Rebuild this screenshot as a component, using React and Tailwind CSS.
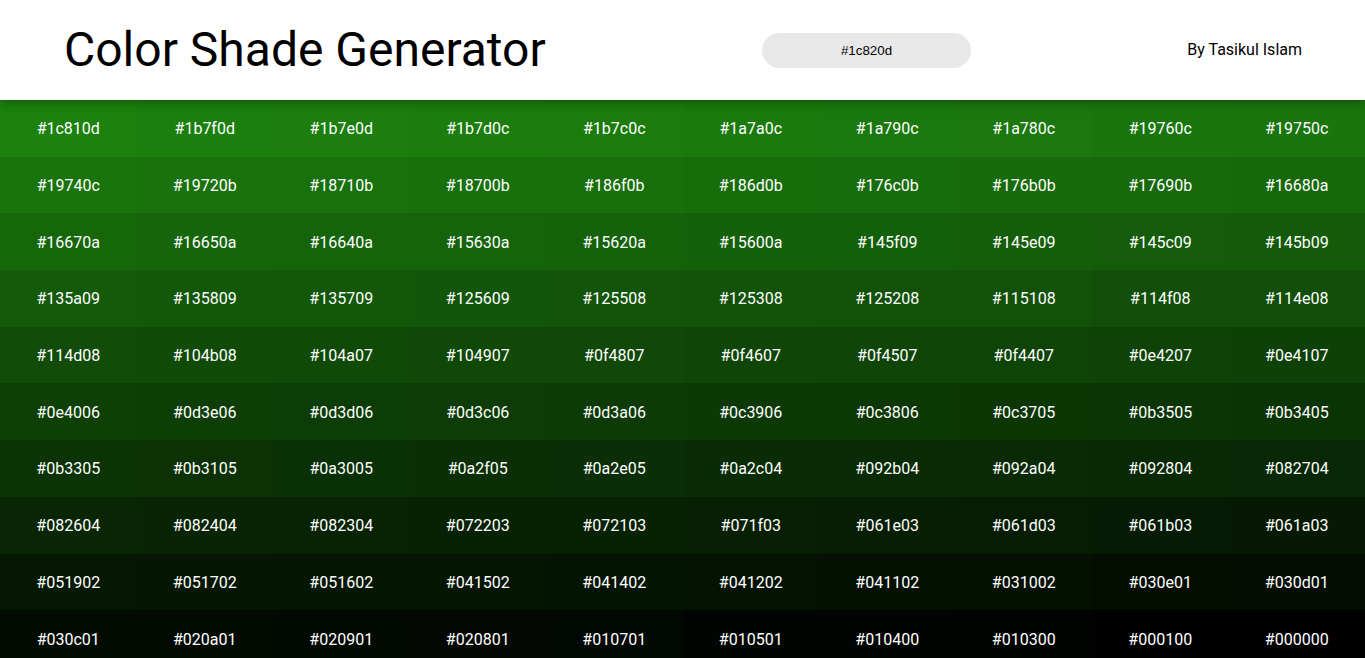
import React from 'react';

const shades = [
    '#1c810d', '#1b7f0d', '#1b7e0d', '#1b7d0c', '#1b7c0c', '#1a7a0c', '#1a790c', '#1a780c', '#19760c', '#19750c',
    '#19740c', '#19720b', '#18710b', '#18700b', '#186f0b', '#186d0b', '#176c0b', '#176b0b', '#17690b', '#16680a',
    '#16670a', '#16650a', '#16640a', '#15630a', '#15620a', '#15600a', '#145f09', '#145e09', '#145c09', '#145b09',
    '#135a09', '#135809', '#135709', '#125609', '#125508', '#125308', '#125208', '#115108', '#114f08', '#114e08',
    '#114d08', '#104b08', '#104a07', '#104907', '#0f4807', '#0f4607', '#0f4507', '#0f4407', '#0e4207', '#0e4107',
    '#0e4006', '#0d3e06', '#0d3d06', '#0d3c06', '#0d3a06', '#0c3906', '#0c3806', '#0c3705', '#0b3505', '#0b3405',
    '#0b3305', '#0b3105', '#0a3005', '#0a2f05', '#0a2e05', '#0a2c04', '#092b04', '#092a04', '#092804', '#082704',
    '#082604', '#082404', '#082304', '#072203', '#072103', '#071f03', '#061e03', '#061d03', '#061b03', '#061a03',
    '#051902', '#051702', '#051602', '#041502', '#041402', '#041202', '#041102', '#031002', '#030e01', '#030d01',
    '#030c01', '#020a01', '#020901', '#020801', '#010701', '#010501', '#010400', '#010300', '#000100', '#000000',
];

const App = () => {
    return (
        <div className="min-h-screen bg-white font-['Roboto',sans-serif]">
            {/* Header */}
            <header className="relative z-10 flex h-[100px] items-center justify-between bg-white pl-16 pr-[63px] shadow-[0_2px_10px_rgba(0,0,0,0.35)]">
                <h1 className="text-[48px] font-normal leading-none text-black">Color Shade Generator</h1>
                <input
                    type="text"
                    defaultValue="#1c820d"
                    className="h-[35px] w-[209px] rounded-full bg-[#e8e8e8] text-center font-['Liberation_Sans',Arial,sans-serif] text-[13.33px] text-black outline-none"
                />
                <p className="text-base text-black">By Tasikul Islam</p>
            </header>

            {/* Shades grid */}
            <div className="grid grid-cols-10 auto-rows-[56.7px]">
                {shades.map((hex) => (
                    <div
                        key={hex}
                        className="flex items-center justify-center pt-[2px] text-base text-white"
                        style={{ backgroundColor: hex }}
                    >
                        {hex}
                    </div>
                ))}
            </div>
        </div>
    );
};

export default App;
